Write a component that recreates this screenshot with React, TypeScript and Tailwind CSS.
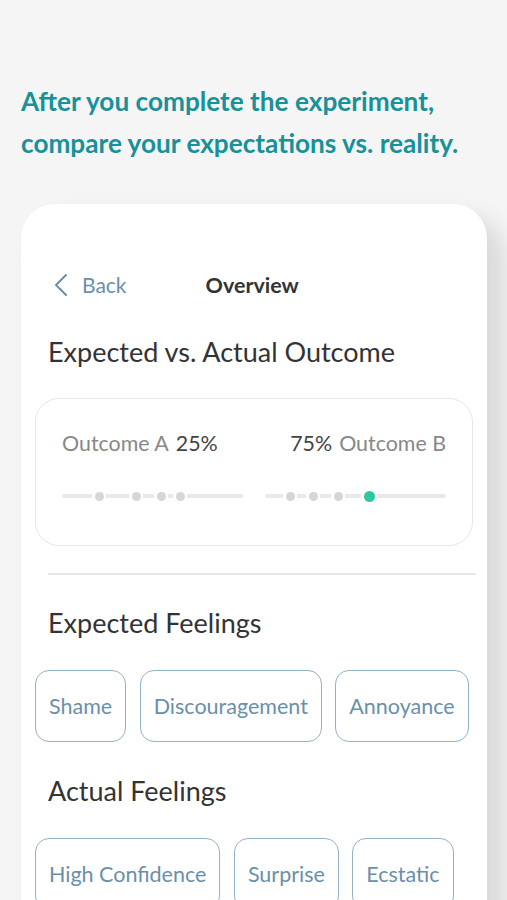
import React from "react";

const font = { fontFamily: "Lato, 'Noto Sans', sans-serif" };

function Chip({ label }: { label: string }) {
  return (
    <div className="h-[72px] px-[13px] flex items-center rounded-[14px] border-[1.5px] border-[#93b1c7] text-[21.5px] text-[#6a8fab] whitespace-nowrap">
      {label}
    </div>
  );
}

function Track({ dots, active }: { dots: number[]; active?: number }) {
  return (
    <div className="relative h-[10px] w-[181px]">
      <div className="absolute left-0 right-0 top-[3px] h-[4px] rounded-full bg-[#e9e9e9]" />
      {dots.map((d) => (
        <div
          key={d}
          className="absolute top-0 h-[10px] w-[14px] -ml-[7px] rounded-full bg-white flex items-center justify-center"
          style={{ left: d }}
        >
          <div className="h-[9px] w-[9px] rounded-full bg-[#d6d6d6]" />
        </div>
      ))}
      {active !== undefined && (
        <div
          className="absolute top-[-1px] h-[12px] w-[16px] -ml-[8px] rounded-full bg-white flex items-center justify-center"
          style={{ left: active }}
        >
          <div className="h-[11px] w-[11px] rounded-full bg-[#2ec79e]" />
        </div>
      )}
    </div>
  );
}

export default function App() {
  return (
    <div className="w-[507px] h-[900px] overflow-hidden bg-[#f5f5f5]" style={font}>
      <div className="pt-[80px] pl-[21px] text-[26.2px] leading-[42px] font-bold text-[#17919a]">
        <div>After you complete the experiment,</div>
        <div>compare your expectations vs. reality.</div>
      </div>
      <div className="mt-[40px] ml-[21px] w-[466px] h-[800px] bg-white rounded-[34px] shadow-[16px_14px_26px_rgba(0,0,0,0.12)]">
        <div className="pt-[70px] pl-[32px] flex items-center h-[92px]">
          <svg width="16" height="24" viewBox="0 0 16 24" className="mr-[13px]">
            <path d="M13 2 L3 12 L13 22" fill="none" stroke="#6a8fab" strokeWidth="2" strokeLinecap="round" strokeLinejoin="round" />
          </svg>
          <span className="text-[21px] text-[#6a8fab]">Back</span>
          <span className="ml-[79px] text-[21.5px] font-bold text-[#333333]">Overview</span>
        </div>
        <div className="mt-[40px] pl-[27px] text-[27px] text-[#333333] leading-[32px]">Expected vs. Actual Outcome</div>
        <div className="mt-[30px] ml-[14px] w-[438px] h-[148px] rounded-[24px] border border-[#e6e6e6] px-[26px] pt-[30px]">
          <div className="flex justify-between text-[21.4px] leading-[28px]">
            <div>
              <span className="text-[#888888]">Outcome A</span>
              <span className="ml-[7px] text-[#444444]">25%</span>
            </div>
            <div>
              <span className="text-[#444444]">75%</span>
              <span className="ml-[7px] text-[#888888]">Outcome B</span>
            </div>
          </div>
          <div className="mt-[34px] flex justify-between">
            <Track dots={[37, 74, 99, 118]} />
            <Track dots={[25, 48, 73]} active={104} />
          </div>
        </div>
        <div className="mt-[27px] ml-[27px] w-[428px] h-[2px] bg-[#e8e8e8]" />
        <div className="mt-[32px] pl-[27px] text-[27px] text-[#333333] leading-[32px]">Expected Feelings</div>
        <div className="mt-[31px] pl-[14px] flex gap-[13.5px]">
          <Chip label="Shame" />
          <Chip label="Discouragement" />
          <Chip label="Annoyance" />
        </div>
        <div className="mt-[33px] pl-[27px] text-[27px] text-[#333333] leading-[32px]">Actual Feelings</div>
        <div className="mt-[31px] pl-[14px] flex gap-[13.5px]">
          <Chip label="High Confidence" />
          <Chip label="Surprise" />
          <Chip label="Ecstatic" />
        </div>
      </div>
    </div>
  );
}
